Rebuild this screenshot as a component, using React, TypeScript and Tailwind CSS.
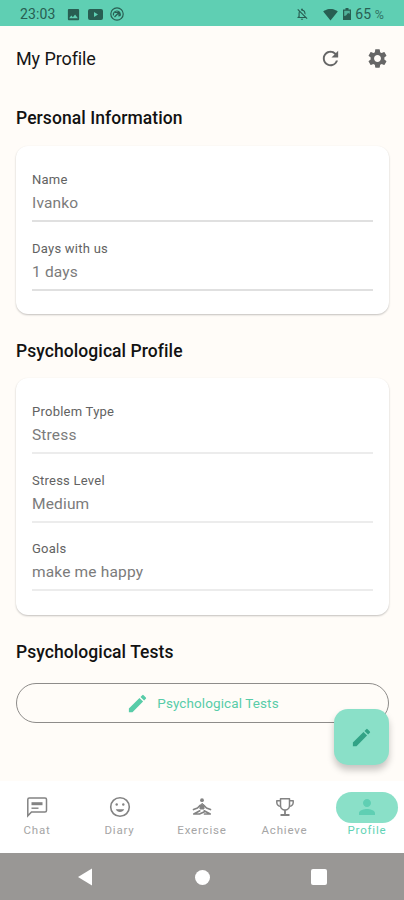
import type { ReactNode } from "react";
import {
  MdEdit,
  MdImage,
  MdOutlineNotificationsOff,
  MdPerson,
  MdRefresh,
  MdSettings,
  MdSignalWifi4Bar,
} from "react-icons/md";

type FieldData = { label: string; value: string };

const personal: FieldData[] = [
  { label: "Name", value: "Ivanko" },
  { label: "Days with us", value: "1 days" },
];

const psychological: FieldData[] = [
  { label: "Problem Type", value: "Stress" },
  { label: "Stress Level", value: "Medium" },
  { label: "Goals", value: "make me happy" },
];

function ChatIcon() {
  return (
    <svg viewBox="0 0 24 24" className="w-6 h-6" fill="none" stroke="currentColor" strokeWidth="1.5">
      <path d="M2.800 20.800V4.500Q2.800 3 4.300 3H20Q21.500 3 21.500 4.500V15.500Q21.500 17 20 17H6.500Z" />
      <path d="M6.500 8.700H17.500" strokeWidth="3" />
      <path d="M6.500 13.200H13.500" strokeWidth="1.4" />
    </svg>
  );
}

function SmileIcon() {
  return (
    <svg viewBox="0 0 24 24" className="w-6 h-6">
      <circle cx="12" cy="12" r="9.300" fill="none" stroke="currentColor" strokeWidth="1.6" />
      <circle cx="8.700" cy="9.500" r="1.200" fill="currentColor" />
      <circle cx="15.300" cy="9.500" r="1.200" fill="currentColor" />
      <path d="M7.800 14.300h8.400c-.8 1.700-2.300 2.700-4.200 2.700s-3.400-1-4.200-2.700z" fill="currentColor" />
    </svg>
  );
}

function MeditationIcon() {
  return (
    <svg viewBox="0 0 24 24" className="w-6 h-6" fill="none" stroke="currentColor" strokeLinecap="round" strokeLinejoin="round">
      <circle cx="12" cy="5.200" r="1.900" fill="currentColor" stroke="none" />
      <path d="M12 8.500 10 10.500v3.500h4v-3.500z" fill="currentColor" strokeWidth="1" />
      <path d="M10 10.500 7.500 13 3.500 14.500M14 10.500l2.500 2.500 4 1.500" strokeWidth="1.700" />
      <path d="M9.800 15.800 3.800 19h5.700l5-2.300M14.200 15.800l6 3.200h-5.700" strokeWidth="1.700" />
    </svg>
  );
}

function TrophyIcon() {
  return (
    <svg viewBox="0 0 24 24" className="w-6 h-6" fill="none" stroke="currentColor" strokeWidth="1.5" strokeLinejoin="round">
      <path d="M7.500 3.800h9v6.700a4.500 4.500 0 0 1-9 0z" />
      <path d="M7.500 5.800H3.800v1.700a3.800 3.800 0 0 0 3.900 3.800M16.500 5.800h3.700v1.700a3.800 3.800 0 0 1-3.900 3.800" />
      <path d="M12 15v4.500M7.500 20h9" strokeWidth="1.8" />
    </svg>
  );
}

function StatusBar() {
  return (
    <div className="flex h-[26px] shrink-0 items-center bg-[#5fcfb3] pl-5 pr-[20px] pt-[2px] text-[#285e52]">
      <span className="w-[46px] text-[14px] tracking-[0.1px]">23:03</span>
      <MdImage className="h-[15px] w-[15px]" />
      <svg viewBox="0 0 15 11" className="ml-[7px] h-[11px] w-[15px]">
        <rect width="15" height="11" rx="2" fill="currentColor" />
        <path d="M6 3l4 2.500-4 2.500z" fill="#5fcfb3" />
      </svg>
      <svg viewBox="0 0 14 14" className="ml-[7px] h-[14px] w-[14px]" fill="none" stroke="currentColor" strokeWidth="1.200">
        <circle cx="7" cy="7" r="6.200" />
        <path d="M3.500 8.500A3.500 3.500 0 1 1 10 9M5 5.500h4v4M9 5.500 4.500 10" />
      </svg>
      <MdOutlineNotificationsOff className="ml-auto h-[14px] w-[14px]" />
      <MdSignalWifi4Bar className="ml-[14px] h-[15px] w-[15px]" />
      <svg viewBox="0 0 8 12" className="ml-[5px] h-3 w-2">
        <path d="M2.500 0h3v1.500H8V12H0V1.500h2.500z" fill="currentColor" />
        <path d="M1.200 2.700h5.600v3L5 5 3 7.500 1.200 8z" fill="#5fcfb3" opacity=".75" />
      </svg>
      <span className="ml-1 text-[14px] tracking-[0.1px] whitespace-nowrap">
        65 <span className="text-[12.500px] opacity-80">%</span>
      </span>
    </div>
  );
}

function Field({ label, value, line }: FieldData & { line: string }) {
  return (
    <div className={`flex h-[52px] flex-col border-b-2 ${line}`}>
      <span className="h-[18px] pt-px text-[13px] leading-[17px] tracking-[0.25px] text-[#626262]">{label}</span>
      <span className="h-[30px] pt-px text-[15.500px] leading-[29px] tracking-[0.16px] text-[#7b7b7b]">{value}</span>
    </div>
  );
}

function Card({ fields, className, line }: { fields: FieldData[]; className: string; line: string }) {
  return (
    <div className={`flex flex-col gap-[16.6px] rounded-[12px] bg-white px-4 pt-6 shadow-[0_1px_2px_rgba(0,0,0,0.24)] ${className}`}>
      {fields.map((field) => (
        <Field key={field.label} {...field} line={line} />
      ))}
    </div>
  );
}

function SectionTitle({ children }: { children: ReactNode }) {
  return <h2 className="h-6 text-[17.500px] leading-[25px] font-medium tracking-[0.07px] text-[#121212]">{children}</h2>;
}

const tabs = [
  { label: "Chat", icon: <ChatIcon /> },
  { label: "Diary", icon: <SmileIcon /> },
  { label: "Exercise", icon: <MeditationIcon /> },
  { label: "Achieve", icon: <TrophyIcon /> },
  { label: "Profile", icon: <MdPerson className="h-6 w-6" />, active: true },
];

function BottomTabs() {
  return (
    <nav className="flex h-[72px] shrink-0 justify-between bg-white px-[6px] pt-[11px]">
      {tabs.map((tab) => (
        <div key={tab.label} className="flex w-[62px] flex-col items-center">
          <div
            className={`flex h-[31px] w-[62px] items-center justify-center rounded-full pb-px ${
              tab.active ? "bg-[#8ae0c8] text-[#5fcfb3]" : "text-[#838383]"
            }`}
          >
            {tab.icon}
          </div>
          <span
            className={`text-[11.500px] leading-[14px] tracking-[0.8px] ${
              tab.active ? "text-[#5fd3b5]" : "text-[#a5a5a5]"
            }`}
          >
            {tab.label}
          </span>
        </div>
      ))}
    </nav>
  );
}

function SystemNav() {
  return (
    <div className="flex h-[47px] shrink-0 items-center justify-between bg-[#999795] pl-[78px] pr-[77px] pt-px text-white">
      <svg viewBox="0 0 15 18" className="h-[18px] w-[15px]" fill="currentColor">
        <path d="M14 0.500v17L0 9z" />
      </svg>
      <div className="h-[15px] w-[15px] rounded-full bg-white" />
      <div className="h-4 w-4 rounded-[2px] bg-white" />
    </div>
  );
}

export default function App() {
  return (
    <div className="flex h-[900px] w-[404px] flex-col overflow-hidden bg-[#fffcf8] font-['Roboto',sans-serif]">
      <StatusBar />
      <header className="flex h-[66px] shrink-0 items-center pb-[2px] pl-4 pr-[15px]">
        <h1 className="flex-1 text-[18px] tracking-[-0.1px] text-[#161616]">My Profile</h1>
        <MdRefresh className="h-[23px] w-[23px] text-[#666666]" />
        <MdSettings className="ml-6 h-[23px] w-[23px] text-[#666666]" />
      </header>

      <main className="relative flex flex-1 flex-col pl-4 pr-[15px] pt-[14px]">
        <SectionTitle>Personal Information</SectionTitle>
        <Card fields={personal} className="mt-4 h-[168px]" line="border-[#e0e0e0]" />
        <div className="mt-[25px]">
          <SectionTitle>Psychological Profile</SectionTitle>
        </div>
        <Card fields={psychological} className="mt-[15px] h-[237px]" line="border-[#ececec]" />
        <div className="mt-[25px]">
          <SectionTitle>Psychological Tests</SectionTitle>
        </div>
        <button className="mt-[19px] flex h-10 items-center justify-center gap-[8px] rounded-full border border-[#8e8c8a] text-[#58cca8]">
          <MdEdit className="h-[23px] w-[23px]" />
          <span className="text-[13.500px] tracking-[0.1px]">Psychological Tests</span>
        </button>

        {/* Floating edit action */}
        <button className="absolute right-[15px] bottom-4 flex h-[56px] w-[55px] items-center justify-center rounded-[14px] bg-[#8ae0c8] text-[#32a386] shadow-[0_5px_7px_rgba(0,0,0,0.22)]">
          <MdEdit className="h-[23px] w-[23px]" />
        </button>
      </main>

      <BottomTabs />
      <SystemNav />
    </div>
  );
}
